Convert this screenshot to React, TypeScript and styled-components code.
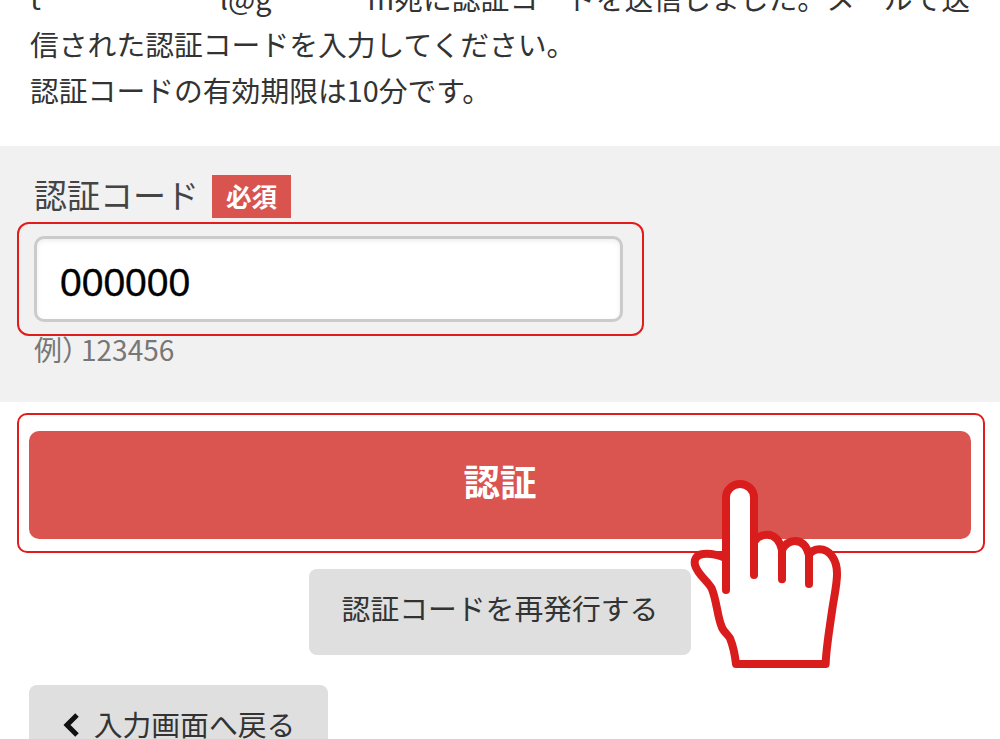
import React from "react";
import styled, { createGlobalStyle } from "styled-components";

const Global = createGlobalStyle`
  html, body { margin: 0; padding: 0; background: #fff; }
  body { font-family: "Noto Sans CJK JP", "Noto Sans", sans-serif; color: #333; }
  * { box-sizing: border-box; }
`;

const Page = styled.main`
  position: relative;
  width: 1000px;
  height: 739px;
  overflow: hidden;
  background: #fff;
`;

const Lead = styled.p`
  margin: -25px 0 0;
  padding: 0 14px 0 30px;
  font-size: 28.8px;
  line-height: 46px;
`;

const Redacted = styled.span<{ $w: number }>`
  display: inline-block;
  width: ${(p) => p.$w}px;
`;

const FieldPanel = styled.section`
  margin-top: 33px;
  height: 256px;
  padding: 29px 35px 0 34px;
  background: #f1f1f1;
`;

const LabelRow = styled.div`
  display: flex;
  align-items: center;
  gap: 13px;
  height: 43px;
`;

const Label = styled.label`
  margin-top: -4px;
  font-size: 33px;
  line-height: 43px;
  color: #444;
`;

const RequiredBadge = styled.span`
  display: flex;
  align-items: center;
  justify-content: center;
  width: 79px;
  height: 43px;
  padding-bottom: 3px;
  box-shadow: 0 0 0 1px #fbeeee;
  background: #d9534f;
  color: #fff;
  font-size: 25.6px;
  font-weight: 700;
`;

const InputFrame = styled.div`
  position: relative;
  margin-top: 18px;
  width: 589px;
  &::after {
    content: "";
    position: absolute;
    inset: -14px -21px -14px -17px;
    border: 2px solid #e21b1b;
    border-radius: 12px;
    pointer-events: none;
  }
`;

const CodeInput = styled.input`
  display: block;
  width: 100%;
  height: 86px;
  padding: 8px 23px 0;
  border: 3px solid #cbcbcb;
  border-radius: 10px;
  background: #fff;
  box-shadow: inset 0 2px 5px rgba(0, 0, 0, 0.07);
  color: #000;
  font-family: "Liberation Sans", Arial, sans-serif;
  font-size: 39px;
  -webkit-text-stroke: 0.3px #000;
  outline: none;
`;

const Hint = styled.p`
  margin: 6px 0 0;
  font-size: 28px;
  line-height: 42px;
  color: #777;
`;

const HintParen = styled.span`
  margin-right: -9px;
`;

const SubmitFrame = styled.div`
  position: relative;
  margin: 29px 29px 0;
  &::after {
    content: "";
    position: absolute;
    inset: -18px -14px -14px -12px;
    border: 2px solid #e21b1b;
    border-radius: 10px;
    pointer-events: none;
  }
`;

const SubmitButton = styled.button`
  display: block;
  width: 100%;
  height: 108px;
  padding: 0 0 10px;
  border: 0;
  border-radius: 10px;
  background: #da5550;
  color: #fff;
  font-family: inherit;
  font-size: 36.5px;
  font-weight: 700;
`;

const ResendRow = styled.div`
  display: flex;
  justify-content: center;
  margin-top: 30px;
`;

const GrayButton = styled.button`
  display: flex;
  align-items: center;
  justify-content: center;
  height: 86px;
  border: 0;
  border-radius: 8px;
  background: #dfdfdf;
  color: #333;
  font-family: inherit;
  font-size: 28.8px;
`;

const ResendButton = styled(GrayButton)`
  width: 382px;
  padding-bottom: 10px;
`;

const BackButton = styled(GrayButton)`
  width: 299px;
  gap: 14px;
  margin: 30px 0 0 29px;
  align-items: flex-start;
  padding: 18px 0 0;
`;

const BackIcon = styled.svg`
  width: 18px;
  height: 24px;
  margin-top: 10px;
  flex: none;
`;

const HandIcon = styled.svg`
  position: absolute;
  left: 660px;
  top: 460px;
  width: 200px;
  height: 220px;
`;

export default function App() {
  return (
    <Page>
      <Global />
      <Lead>
        t<Redacted $w={179} />l@g<Redacted $w={96} />m宛に認証コードを送信しました。メールで送信された認証コードを入力してください。
        <br />
        認証コードの有効期限は10分です。
      </Lead>
      <FieldPanel>
        <LabelRow>
          <Label htmlFor="code">認証コード</Label>
          <RequiredBadge>必須</RequiredBadge>
        </LabelRow>
        <InputFrame>
          <CodeInput id="code" defaultValue="000000" />
        </InputFrame>
        <Hint>
          <HintParen>例）</HintParen>123456
        </Hint>
      </FieldPanel>
      <SubmitFrame>
        <SubmitButton>認証</SubmitButton>
      </SubmitFrame>
      <ResendRow>
        <ResendButton>認証コードを再発行する</ResendButton>
      </ResendRow>
      <BackButton>
        <BackIcon viewBox="0 0 18 24" aria-hidden="true">
          <path d="M15 2 L5 12 L15 22" fill="none" stroke="#111" strokeWidth="5" />
        </BackIcon>
        入力画面へ戻る
      </BackButton>
      <HandIcon viewBox="0 0 600 660" aria-hidden="true">
        <path
          d="M228 612 L497 612 C498 570 505 530 515 460 C522 410 532 370 531 340 C531 300 510 268 478 268 C465 268 455 272 447 285 C440 258 425 243 405 243 C390 243 375 252 366 270 C360 245 345 224 322 224 C308 224 292 230 282 245 L282 112 C282 88 262 72 240 72 C218 72 198 90 198 112 L198 295 C175 285 150 280 130 282 C108 284 100 300 106 318 C115 345 140 360 155 385 C170 420 172 470 185 500 C190 515 205 525 210 535 C220 560 225 585 228 612 Z"
          fill="#fff"
          stroke="#d91c1c"
          strokeWidth="24"
          strokeLinejoin="round"
        />
        <path
          d="M198 290 V390 M282 245 V345 M366 262 V358 M447 276 V372"
          fill="none"
          stroke="#d91c1c"
          strokeWidth="24"
          strokeLinecap="round"
        />
      </HandIcon>
    </Page>
  );
}
